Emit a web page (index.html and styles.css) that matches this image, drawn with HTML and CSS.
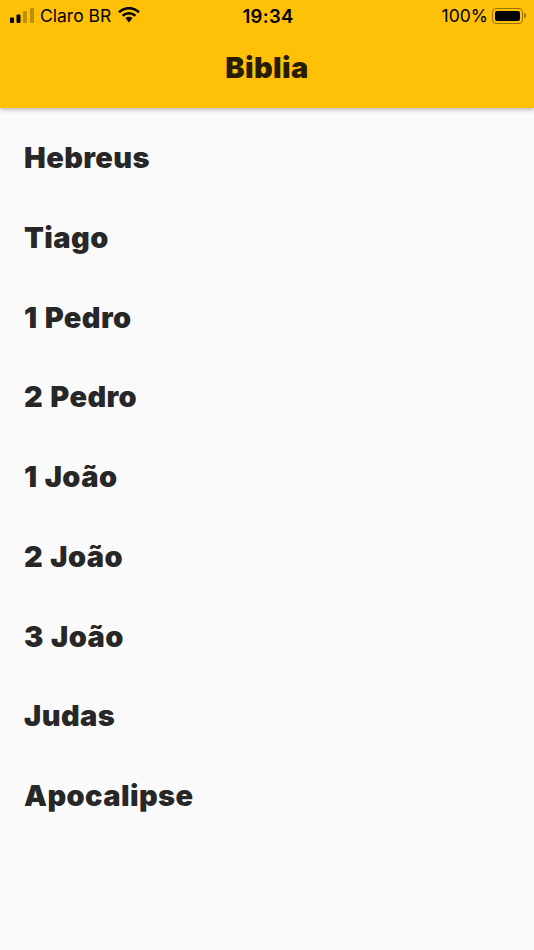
FILE: index.html
```html
<!DOCTYPE html>
<html lang="pt-BR">
<head>
<meta charset="UTF-8">
<meta name="viewport" content="width=device-width, initial-scale=1.0">
<title>Biblia</title>
<link rel="stylesheet" href="styles.css">
</head>
<body>

<!-- Topo -->
<header class="app-bar">
    <div class="status-bar">
        <div class="status-left">
            <svg class="signal" width="24" height="15" viewBox="0 0 24 15">
                <rect x="0" y="9.5" width="4" height="5.5" rx="1" fill="#000"/>
                <rect x="6.5" y="6.5" width="4" height="8.5" rx="1" fill="#000"/>
                <rect x="13" y="3" width="4" height="12" rx="1" fill="#000" fill-opacity="0.25"/>
                <rect x="20" y="0" width="4" height="15" rx="1" fill="#000" fill-opacity="0.25"/>
            </svg>
            <span>Claro BR</span>
            <svg class="wifi" width="22" height="16" viewBox="0 0 22 16">
                <path d="M1 5.2 C6.8 -0.2 15.2 -0.2 21 5.2" fill="none" stroke="#000" stroke-width="2.6"/>
                <path d="M4.6 8.8 C8.4 5.4 13.6 5.4 17.4 8.8" fill="none" stroke="#000" stroke-width="2.6"/>
                <path d="M7.4 11 C9.6 9.3 12.4 9.3 14.6 11 L11 15.4 Z" fill="#000"/>
            </svg>
        </div>
        <div class="status-time">19:34</div>
        <div class="status-right">
            <span>100%</span>
            <div class="battery"><div class="battery-fill"></div></div>
            <div class="battery-tip"></div>
        </div>
    </div>
    <h1 class="title">Biblia</h1>
</header>

<!-- Livros -->
<ul class="book-list">
    <li>Hebreus</li>
    <li>Tiago</li>
    <li>1 Pedro</li>
    <li>2 Pedro</li>
    <li>1 João</li>
    <li>2 João</li>
    <li>3 João</li>
    <li>Judas</li>
    <li>Apocalipse</li>
</ul>

</body>
</html>
```

FILE: styles.css
```css
html, body {
    height: 100%;
}
body {
    margin: 0;
    background-color: #fafafa;
    font-family: Inter, "Liberation Sans", sans-serif;
    overflow: hidden;
}
.app-bar {
    height: 108px;
    background-color: #ffc107;
    box-shadow: 0px 2px 4px rgba(0, 0, 0, 0.25);
}
.status-bar {
    height: 31px;
    padding: 0 8px 0 10px;
    display: grid;
    grid-template-columns: 1fr auto 1fr;
    align-items: center;
    font-size: 17.5px;
    color: #000;
}
.status-left {
    display: flex;
    align-items: center;
}
.signal {
    margin-right: 6px;
    margin-bottom: 1px;
}
.wifi {
    margin-left: 7px;
    margin-bottom: 1px;
}
.status-time {
    font-size: 18.5px;
    font-weight: 600;
    letter-spacing: 0.3px;
}
.status-right {
    display: flex;
    align-items: center;
    justify-content: flex-end;
}
.battery {
    box-sizing: border-box;
    width: 31px;
    height: 16px;
    margin-left: 4px;
    padding: 2px;
    border: 1px solid rgba(0, 0, 0, 0.4);
    border-radius: 4px;
}
.battery-fill {
    height: 100%;
    background-color: #000;
    border-radius: 2px;
}
.battery-tip {
    width: 2px;
    height: 5px;
    margin-left: 1px;
    background-color: rgba(0, 0, 0, 0.4);
    border-radius: 0 2px 2px 0;
}
.title {
    margin: 0;
    padding-top: 18px;
    font-size: 29px;
    line-height: 38px;
    font-weight: 900;
    letter-spacing: 0.4px;
    text-align: center;
    color: rgba(0, 0, 0, 0.87);
}
.book-list {
    list-style: none;
    margin: 0;
    padding: 10px 24px 0;
}
.book-list li {
    height: 79.75px;
    line-height: 79.75px;
    font-size: 29px;
    font-weight: 900;
    letter-spacing: 0.4px;
    word-spacing: 1px;
    color: rgba(0, 0, 0, 0.87);
}
```
